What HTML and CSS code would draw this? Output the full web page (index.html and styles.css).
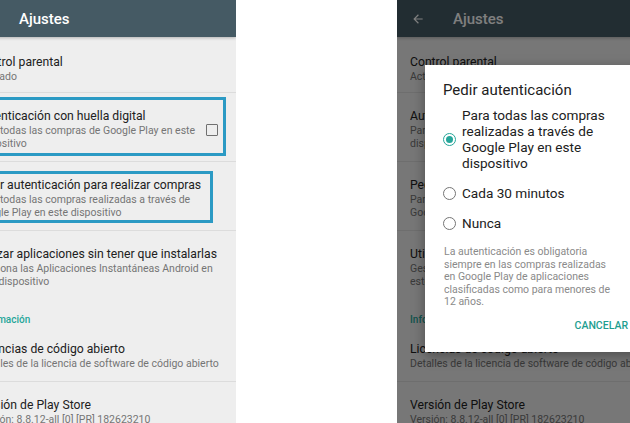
FILE: index.html
```html
<!DOCTYPE html>
<html lang="es">
<head>
    <meta charset="UTF-8">
    <meta name="viewport" content="width=device-width, initial-scale=1.0">
    <title>Ajustes - Pedir autenticación</title>
    <link rel="stylesheet" href="styles.css">
</head>
<body>
    <div class="screens">
        <!-- pantalla izquierda: ajustes con las opciones marcadas -->
        <div class="phone">
            <div class="toolbar">
                <svg class="back" viewBox="0 0 24 24"><path d="M20 11H7.8l5.6-5.6L12 4l-8 8 8 8 1.4-1.4L7.8 13H20z"/></svg>
                <span class="toolbar-title">Ajustes</span>
            </div>
            <div class="list">
                <div class="item first">
                    <div class="item-title">Control parental</div>
                    <div class="item-sub">Activado</div>
                </div>
                <div class="item with-check">
                    <div class="item-text">
                        <div class="item-title">Autenticación con huella digital</div>
                        <div class="item-sub">Para todas las compras de Google Play en este<br>dispositivo</div>
                    </div>
                    <span class="checkbox"></span>
                </div>
                <div class="item">
                    <div class="item-title">Pedir autenticación para realizar compras</div>
                    <div class="item-sub">Para todas las compras realizadas a través de<br>Google Play en este dispositivo</div>
                </div>
                <div class="item no-line">
                    <div class="item-title">Utilizar aplicaciones sin tener que instalarlas</div>
                    <div class="item-sub">Gestiona las Aplicaciones Instantáneas Android en<br>este dispositivo</div>
                </div>
                <div class="category">Información</div>
                <div class="item">
                    <div class="item-title">Licencias de código abierto</div>
                    <div class="item-sub">Detalles de la licencia de software de código abierto</div>
                </div>
                <div class="item no-line">
                    <div class="item-title">Versión de Play Store</div>
                    <div class="item-sub">Versión: 8.8.12-all [0] [PR] 182623210</div>
                </div>
            </div>
            <div class="mark mark-one"></div>
            <div class="mark mark-two"></div>
        </div>

        <!-- pantalla derecha: diálogo abierto -->
        <div class="phone">
            <div class="toolbar">
                <svg class="back" viewBox="0 0 24 24"><path d="M20 11H7.8l5.6-5.6L12 4l-8 8 8 8 1.4-1.4L7.8 13H20z"/></svg>
                <span class="toolbar-title">Ajustes</span>
            </div>
            <div class="list">
                <div class="item first">
                    <div class="item-title">Control parental</div>
                    <div class="item-sub">Activado</div>
                </div>
                <div class="item with-check">
                    <div class="item-text">
                        <div class="item-title">Autenticación con huella digital</div>
                        <div class="item-sub">Para todas las compras de Google Play en este<br>dispositivo</div>
                    </div>
                    <span class="checkbox"></span>
                </div>
                <div class="item">
                    <div class="item-title">Pedir autenticación para realizar compras</div>
                    <div class="item-sub">Para todas las compras realizadas a través de<br>Google Play en este dispositivo</div>
                </div>
                <div class="item no-line">
                    <div class="item-title">Utilizar aplicaciones sin tener que instalarlas</div>
                    <div class="item-sub">Gestiona las Aplicaciones Instantáneas Android en<br>este dispositivo</div>
                </div>
                <div class="category">Información</div>
                <div class="item">
                    <div class="item-title">Licencias de código abierto</div>
                    <div class="item-sub">Detalles de la licencia de software de código abierto</div>
                </div>
                <div class="item no-line">
                    <div class="item-title">Versión de Play Store</div>
                    <div class="item-sub">Versión: 8.8.12-all [0] [PR] 182623210</div>
                </div>
            </div>
            <div class="scrim"></div>
            <div class="dialog">
                <div class="dialog-title">Pedir autenticación</div>
                <div class="option">
                    <span class="radio checked"></span>
                    <span class="option-text">Para todas las compras<br>realizadas a través de<br>Google Play en este<br>dispositivo</span>
                </div>
                <div class="option">
                    <span class="radio"></span>
                    <span class="option-text">Cada 30 minutos</span>
                </div>
                <div class="option">
                    <span class="radio"></span>
                    <span class="option-text">Nunca</span>
                </div>
                <p class="note">La autenticación es obligatoria<br>siempre en las compras realizadas<br>en Google Play de aplicaciones<br>clasificadas como para menores de<br>12 años.</p>
                <div class="actions">
                    <span class="button">CANCELAR</span>
                </div>
            </div>
        </div>
    </div>
</body>
</html>
```

FILE: styles.css
```css
body {
    margin: 0;
    width: 630px;
    height: 423px;
    overflow: hidden;
    background-color: #fff;
    font-family: Roboto, "Noto Sans", sans-serif;
}

.screens {
    display: flex;
    gap: 161px;
    margin-left: -37px;
}

.phone {
    position: relative;
    flex: none;
    width: 273px;
    height: 423px;
    overflow: hidden;
    background-color: #eeeeee;
}

.toolbar {
    position: relative;
    display: flex;
    align-items: center;
    height: 37px;
    background-color: #455a64;
    box-shadow: 0 1px 3px rgba(0, 0, 0, 0.25);
}

.back {
    width: 14px;
    height: 14px;
    margin-left: 14px;
    fill: #fff;
}

.toolbar-title {
    margin-left: 28px;
    color: #fff;
    font-size: 15px;
    font-weight: 500;
}

.item {
    padding: 15px 13px 11px;
    border-bottom: 1px solid #dcdcdc;
    white-space: nowrap;
}

.item.first {
    padding-top: 17px;
    padding-bottom: 9px;
}

.item.no-line {
    border-bottom: none;
}

.item.with-check {
    display: flex;
    align-items: center;
    justify-content: space-between;
    padding-right: 18px;
}

.item-title {
    font-size: 12.2px;
    line-height: 16px;
    color: #212121;
}

.item-sub {
    font-size: 10.5px;
    line-height: 13px;
    color: #757575;
}

.checkbox {
    width: 10px;
    height: 10px;
    margin-top: 2px;
    border: 1.5px solid #707070;
    border-radius: 1px;
}

.category {
    padding: 15px 13px 0;
    height: 12px;
    font-size: 10px;
    line-height: 12px;
    font-weight: 500;
    color: #26a69a;
}

/* recuadros de resaltado */
.mark {
    position: absolute;
    left: 0;
    border: 3px solid #2b9ac4;
}

.mark-one {
    top: 97px;
    right: 10px;
    height: 53px;
}

.mark-two {
    top: 171px;
    right: 23px;
    height: 46px;
}

.scrim {
    position: absolute;
    inset: 0;
    background-color: rgba(0, 0, 0, 0.5);
}

.dialog {
    position: absolute;
    top: 65px;
    left: 28px;
    width: 219px;
    height: 287px;
    box-sizing: border-box;
    padding: 16px 0 0;
    background-color: #fff;
    box-shadow: 0 4px 12px rgba(0, 0, 0, 0.35);
}

.dialog-title {
    padding-left: 18px;
    font-size: 15px;
    line-height: 18px;
    color: #212121;
}

.option {
    display: flex;
    align-items: center;
    gap: 6px;
    padding: 8px 0 8px 18px;
}

.option + .option {
    padding-top: 6px;
}

.radio {
    position: relative;
    flex: none;
    width: 11px;
    height: 11px;
    border: 1.5px solid #757575;
    border-radius: 50%;
}

.radio.checked {
    border-color: #26a69a;
}

.radio.checked::after {
    content: "";
    position: absolute;
    inset: 2px;
    border-radius: 50%;
    background-color: #26a69a;
}

.option-text {
    font-size: 13.6px;
    line-height: 16px;
    color: #212121;
    white-space: nowrap;
}

.note {
    margin: 7px 0 0;
    padding-left: 19px;
    font-size: 10.5px;
    line-height: 12.6px;
    color: #8a8a8a;
    white-space: nowrap;
}

.actions {
    display: flex;
    justify-content: flex-end;
    padding: 10px 16px 0;
}

.button {
    font-size: 10.5px;
    line-height: 14px;
    font-weight: 500;
    color: #1e9e90;
}
```
